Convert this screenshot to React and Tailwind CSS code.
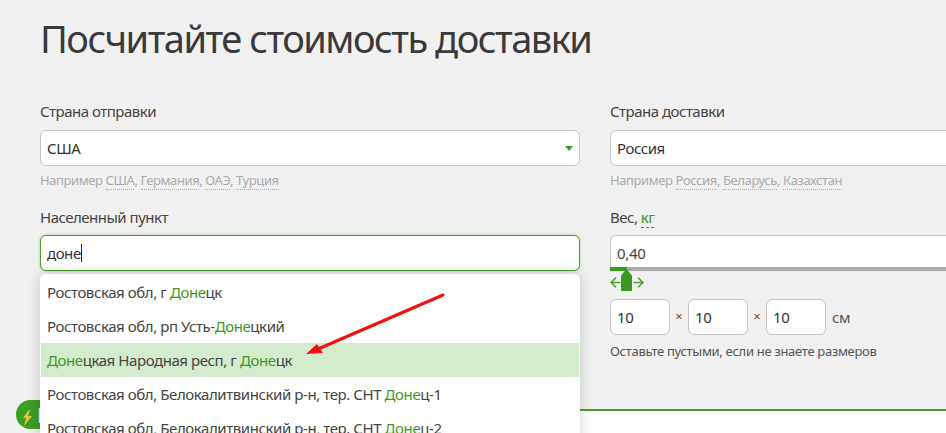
import { ArrowLeft, ArrowRight } from "lucide-react";

const green = "text-[#3d9a1f]";

function Hint({ items }) {
  return (
    <div className="mt-[4px] h-[20px] text-[13px] leading-[20px] tracking-[-0.4px] text-[#aaaaaa]">
      Например{" "}
      {items.map((item, i) => (
        <span key={item}>
          <span className="border-b border-dotted border-[#aaaaaa]">{item}</span>
          {i < items.length - 1 ? ", " : ""}
        </span>
      ))}
    </div>
  );
}

function Label({ children, className = "" }) {
  return <div className={`h-[20px] text-[15px] leading-[20px] tracking-[-0.5px] text-[#444] ${className}`}>{children}</div>;
}

function Field({ children, className = "" }) {
  return (
    <div className={`flex h-[36px] items-center rounded-[6px] border px-[6px] bg-white text-[15px] tracking-[-0.45px] text-[#333] ${className}`}>
      {children}
    </div>
  );
}

function Mark({ children }) {
  return <span className={green}>{children}</span>;
}

function Suggestion({ active, children }) {
  return (
    <div className={`flex h-[34px] items-center pl-[6px] text-[15px] tracking-[-0.42px] whitespace-nowrap text-[#444] ${active ? "bg-[#d5ebcd]" : ""}`}>
      <span>{children}</span>
    </div>
  );
}

function SizeBox() {
  return <Field className="w-[60px] border-[#c4c4c4]">10</Field>;
}

export default function App() {
  return (
    <div className="relative h-[433px] w-[946px] overflow-hidden bg-[#f1f1f1] font-['Noto_Sans',sans-serif]">
      <div className="px-[40px] pt-[13px]">
        <h1 className="h-[50px] text-[38px] leading-[50px] font-normal tracking-[-1.5px] text-[#3a3a3a]">Посчитайте стоимость доставки</h1>

        <div className="mt-[38px] flex gap-[30px]">
          <div className="w-[540px] shrink-0">
            <Label>Страна отправки</Label>
            <Field className="relative mt-[9px] border-[#c4c4c4]">
              США
              <span className="absolute top-[15px] right-[6px] h-0 w-0 border-x-[4px] border-t-[5px] border-x-transparent border-t-[#3d9a1f]" />
            </Field>
            <Hint items={["США", "Германия", "ОАЭ", "Турция"]} />
            <Label className="mt-[17px]">Населенный пункт</Label>
            <Field className="mt-[8px] border-[#4a9a2c] shadow-[0_0_3px_#9ad08a]">
              доне<span className="h-[18px] w-px bg-[#222]" />
            </Field>
          </div>

          <div className="w-[400px] shrink-0">
            <Label>Страна доставки</Label>
            <Field className="mt-[9px] rounded-r-none border-[#c4c4c4]">Россия</Field>
            <Hint items={["Россия", "Беларусь", "Казахстан"]} />
            <Label className="mt-[17px]">
              Вес, <span className={`border-b border-dashed border-[#3d9a1f] ${green}`}>кг</span>
            </Label>
            <div className="relative mt-[8px]">
              <div className="h-[32px] rounded-tl-[6px] border border-b-0 border-[#c4c4c4] bg-white px-[6px] text-[15px] leading-[34px] tracking-[-0.3px] text-[#444]">0,40</div>
              <div className="flex h-[4px] bg-[#ababab]">
                <div className="w-[17px] bg-[#3a9a1e]" />
              </div>
              <div className="absolute top-[34px] left-[11px] h-[22px] w-[11px] bg-[#3a9a1e] [clip-path:polygon(50%_0,100%_30%,100%_100%,0_100%,0_30%)]" />
              <ArrowLeft className="absolute top-[40px] left-[-2px] text-[#4aa52c]" size={15} strokeWidth={2.5} />
              <ArrowRight className="absolute top-[40px] left-[21px] text-[#4aa52c]" size={15} strokeWidth={2.5} />
            </div>
            <div className="mt-[28px] flex items-center">
              <SizeBox />
              <span className="w-[18px] text-center text-[13px] text-[#555]">×</span>
              <SizeBox />
              <span className="w-[18px] text-center text-[13px] text-[#555]">×</span>
              <SizeBox />
              <span className="ml-[6px] text-[15px] tracking-[-0.5px] text-[#555]">см</span>
            </div>
            <div className="mt-[6px] text-[13px] leading-[20px] tracking-[-0.3px] text-[#555]">Оставьте пустыми, если не знаете размеров</div>
          </div>
        </div>
      </div>

      <div className="absolute top-[409px] right-0 left-[40px] h-[24px] border-t-2 border-[#4f9a33] bg-white" />

      <div className="absolute top-[400px] left-[16px] flex h-[29px] w-[60px] items-center rounded-full bg-[#3e9e22] pl-[6px]">
        <svg className="mt-[6px]" width="11" height="16" viewBox="0 0 11 16">
          <path d="M7 0 1 8h3L2 16l8-10H6l2-6z" fill="#f0c440" />
        </svg>
        <span className="ml-[4px] text-[21px] leading-[24px] font-bold text-[#e8f5e0]">P</span>
      </div>

      <div className="absolute top-[274px] left-[40px] h-[170px] w-[540px] rounded-[6px] bg-white p-[1px] shadow-[0_0_14px_rgba(0,0,0,0.18)]">
        <Suggestion>Ростовская обл, г <Mark>Доне</Mark>цк</Suggestion>
        <Suggestion>Ростовская обл, рп Усть-<Mark>Доне</Mark>цкий</Suggestion>
        <Suggestion active><Mark>Доне</Mark>цкая Народная респ, г <Mark>Доне</Mark>цк</Suggestion>
        <Suggestion>Ростовская обл, Белокалитвинский р-н, тер. СНТ <Mark>Доне</Mark>ц-1</Suggestion>
        <Suggestion>Ростовская обл, Белокалитвинский р-н, тер. СНТ <Mark>Доне</Mark>ц-2</Suggestion>
      </div>

      <svg className="absolute top-[290px] left-[300px]" width="150" height="70" viewBox="0 0 150 70">
        <path d="M143 5 18 59" stroke="#f01010" strokeWidth="3" strokeLinecap="round" />
        <path d="M6 64 17 54 23 63z" fill="#f01010" />
      </svg>
    </div>
  );
}
